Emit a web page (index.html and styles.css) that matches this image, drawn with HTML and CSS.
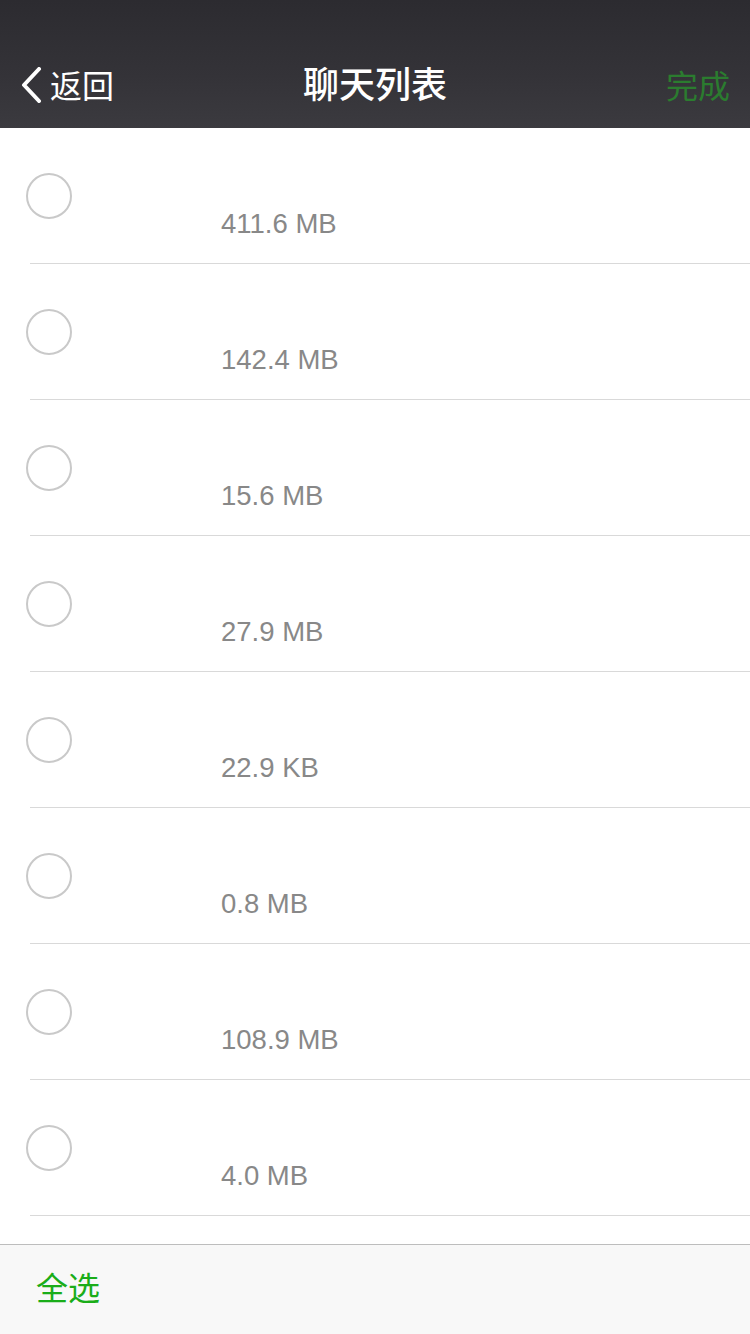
FILE: index.html
```html
<!DOCTYPE html>
<html lang="zh">
<head>
<meta charset="utf-8">
<link rel="stylesheet" href="styles.css">
</head>
<body>
<div class="page">
  <header class="header">
    <div class="nav">
      <div class="back">
        <svg class="chev" width="24" height="36" viewBox="0 0 24 36"><polyline points="19,2 4,18 19,34" fill="none" stroke="#fff" stroke-width="4" stroke-linecap="round" stroke-linejoin="round"/></svg>
        <span>返回</span>
      </div>
      <div class="title">聊天列表</div>
      <div class="done">完成</div>
    </div>
  </header>
  <main class="list">
    <div class="row"><span class="check"></span><div class="info"><div class="size">411.6 MB</div></div></div>
    <div class="row"><span class="check"></span><div class="info"><div class="size">142.4 MB</div></div></div>
    <div class="row"><span class="check"></span><div class="info"><div class="size">15.6 MB</div></div></div>
    <div class="row"><span class="check"></span><div class="info"><div class="size">27.9 MB</div></div></div>
    <div class="row"><span class="check"></span><div class="info"><div class="size">22.9 KB</div></div></div>
    <div class="row"><span class="check"></span><div class="info"><div class="size">0.8 MB</div></div></div>
    <div class="row"><span class="check"></span><div class="info"><div class="size">108.9 MB</div></div></div>
    <div class="row"><span class="check"></span><div class="info"><div class="size">4.0 MB</div></div></div>
  </main>
  <footer class="footer">
    <span class="select-all">全选</span>
  </footer>
</div>
</body>
</html>
```
FILE: styles.css
```css
* { box-sizing: border-box; }
html, body {
  margin: 0;
  padding: 0;
  width: 750px;
  height: 1334px;
  overflow: hidden;
  background: #fff;
  font-family: "Noto Sans CJK SC", "Liberation Sans", sans-serif;
}
.page {
  display: flex;
  flex-direction: column;
  height: 1334px;
}
.header {
  height: 128px;
  flex: none;
  padding-top: 40px;
  background: linear-gradient(180deg, #2c2b30 0%, #343338 60%, #3b3a3f 100%);
}
.nav {
  height: 88px;
  display: flex;
  align-items: center;
  justify-content: space-between;
  position: relative;
  padding: 0 20px 0 20px;
}
.back {
  display: flex;
  align-items: center;
  gap: 6px;
  color: #fff;
  font-size: 32px;
  line-height: 40px;
}
.chev { display: block; margin-top: 2px; }
.title {
  position: absolute;
  left: 0;
  right: 0;
  top: 20px;
  text-align: center;
  color: #fff;
  font-size: 36px;
  font-weight: 500;
  line-height: 44px;
  pointer-events: none;
}
.done {
  color: #2b7c2f;
  font-size: 32px;
  line-height: 40px;
}
.list {
  flex: 1;
  overflow: hidden;
  background: #fff;
}
.row {
  height: 136px;
  display: flex;
  align-items: flex-start;
  background: linear-gradient(#d9d9d9, #d9d9d9) no-repeat 30px 100% / calc(100% - 30px) 1px;
}
.check {
  flex: none;
  width: 46px;
  height: 46px;
  margin: 45px 0 0 26px;
  border: 2px solid #c9c9c9;
  border-radius: 50%;
}
.info {
  padding: 78px 0 0 149px;
}
.size {
  font-family: "Liberation Sans", "Noto Sans CJK SC", sans-serif;
  font-size: 27.5px;
  line-height: 36px;
  color: #888;
}
.footer {
  height: 90px;
  flex: none;
  background: #f8f8f8;
  border-top: 1px solid #bdbdbd;
  display: flex;
  align-items: center;
  padding: 0 36px 8px;
}
.select-all {
  color: #1aad19;
  font-size: 32px;
  line-height: 40px;
}
```
